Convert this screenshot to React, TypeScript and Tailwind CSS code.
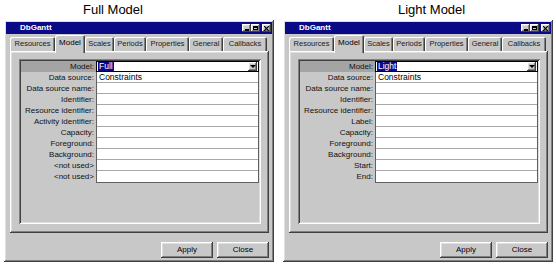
import React from "react";

const raised =
  "shadow-[inset_-1px_-1px_0_#404040,inset_1px_1px_0_#ffffff,inset_-2px_-2px_0_#808080,inset_2px_2px_0_#dfdfdf]";

const tabs = [
  { name: "Resources", w: "w-[45px]" },
  { name: "Model", w: "w-[30px]" },
  { name: "Scales", w: "w-[29px]" },
  { name: "Periods", w: "w-[32px]" },
  { name: "Properties", w: "w-[43px]" },
  { name: "General", w: "w-[34px]" },
  { name: "Callbacks", w: "w-[44px]" },
];

function TitleButton({ kind }: { kind: "min" | "max" | "close" }) {
  return (
    <div className={`w-[9px] h-[8px] bg-[#c8c8c8] ${raised} flex items-center justify-center`}>
      {kind === "min" && <div className="w-[4px] h-[2px] bg-black mt-[3px]" />}
      {kind === "max" && <div className="w-[5px] h-[4px] border border-black border-t-2" />}
      {kind === "close" && (
        <svg width="5" height="5" viewBox="0 0 5 5">
          <path d="M0 0L5 5M5 0L0 5" stroke="black" strokeWidth="1.2" />
        </svg>
      )}
    </div>
  );
}

function Dialog({ model, labels }: { model: string; labels: string[] }) {
  return (
    <div className={`w-[270px] h-[242px] bg-[#c8c8c8] ${raised} p-[2px] flex flex-col`}>
      {/* title bar */}
      <div className="h-[12px] bg-[#0a0a86] flex items-center justify-between pl-[14px] pr-[1px]">
        <span className="text-white font-bold text-[8px] leading-none">DbGantt</span>
        <div className="flex items-center">
          <TitleButton kind="min" />
          <TitleButton kind="max" />
          <div className="w-[2px]" />
          <TitleButton kind="close" />
        </div>
      </div>

      {/* tabs */}
      <div className="h-[17px] flex items-end pl-[4px] relative z-10">
        {tabs.map((t) =>
          t.name === "Model" ? (
            <div
              key={t.name}
              className={`${t.w} h-[18px] -mb-[2px] bg-[#c8c8c8] rounded-t-[2px] shadow-[inset_1px_1px_0_#ffffff,inset_-1px_0_0_#404040,inset_-2px_0_0_#808080] flex items-center justify-center text-[8px] leading-none pb-[2px]`}
            >
              {t.name}
            </div>
          ) : (
            <div
              key={t.name}
              className={`${t.w} h-[14px] bg-[#c8c8c8] rounded-t-[2px] shadow-[inset_1px_1px_0_#ffffff,inset_-1px_0_0_#404040,inset_-2px_0_0_#808080] flex items-center justify-center text-[7.5px] leading-none text-[#202020]`}
            >
              {t.name}
            </div>
          )
        )}
      </div>

      {/* tab panel */}
      <div className={`ml-[4px] w-[259px] h-[182px] ${raised} pt-[8px] pl-[9px]`}>
        <div className="w-[242px] h-[165px] shadow-[inset_1px_1px_0_#808080,inset_-1px_-1px_0_#ffffff,inset_2px_2px_0_#404040,inset_-2px_-2px_0_#dfdfdf] p-[2px]">
          <div className="flex">
            <div className="w-[75px] flex flex-col">
              {labels.map((l, i) => (
                <div
                  key={i}
                  className={`h-[11px] text-[8px] leading-[11px] text-right pr-[2px] text-[#111] ${
                    i === 0 ? "bg-[#a4a4a4]" : ""
                  }`}
                >
                  {l}
                </div>
              ))}
            </div>
            <div className="w-[163px] flex flex-col">
              <div className="h-[11px] bg-white border border-black flex items-center">
                <span className="bg-[#0a0a86] text-white text-[8.5px] leading-[9px] ml-[1px] px-[1px]">
                  {model}
                </span>
                <div className="flex-1" />
                <div className={`w-[9px] h-[9px] bg-[#c8c8c8] ${raised} flex items-center justify-center mr-[1px]`}>
                  <div className="w-0 h-0 border-l-[3px] border-r-[3px] border-t-[3px] border-l-transparent border-r-transparent border-t-black" />
                </div>
              </div>
              <div className="bg-white border-x border-b border-[#606060]">
                {labels.slice(1).map((l, i) => (
                  <div
                    key={i}
                    className={`h-[11px] text-[8.5px] leading-[10px] pl-[2px] ${
                      i < labels.length - 2 ? "border-b border-[#a8a8a8]" : ""
                    }`}
                  >
                    {i === 0 ? "Constraints" : ""}
                  </div>
                ))}
              </div>
            </div>
          </div>
        </div>
      </div>

      {/* buttons */}
      <div className="flex justify-end gap-[4px] mt-[9px] pr-[3px]">
        <div className={`w-[52px] h-[16px] bg-[#c8c8c8] ${raised} flex items-center justify-center text-[8px] leading-none`}>
          Apply
        </div>
        <div className={`w-[52px] h-[16px] bg-[#c8c8c8] ${raised} flex items-center justify-center text-[8px] leading-none`}>
          Close
        </div>
      </div>
    </div>
  );
}

const fullLabels = [
  "Model:",
  "Data source:",
  "Data source name:",
  "Identifier:",
  "Resource identifier:",
  "Activity identifier:",
  "Capacity:",
  "Foreground:",
  "Background:",
  "<not used>",
  "<not used>",
];

const lightLabels = [
  "Model:",
  "Data source:",
  "Data source name:",
  "Identifier:",
  "Resource identifier:",
  "Label:",
  "Capacity:",
  "Foreground:",
  "Background:",
  "Start:",
  "End:",
];

export default function App() {
  return (
    <div className="w-[556px] h-[264px] bg-white flex font-['Liberation_Sans',Arial,sans-serif] text-black">
      <div className="ml-[4px] flex flex-col">
        <div className="h-[20px] pl-[79px] text-[13px] leading-[20px]">Full Model</div>
        <Dialog model="Full" labels={fullLabels} />
      </div>
      <div className="ml-[9px] flex flex-col">
        <div className="h-[20px] pl-[115px] text-[13px] leading-[20px]">Light Model</div>
        <Dialog model="Light" labels={lightLabels} />
      </div>
    </div>
  );
}
